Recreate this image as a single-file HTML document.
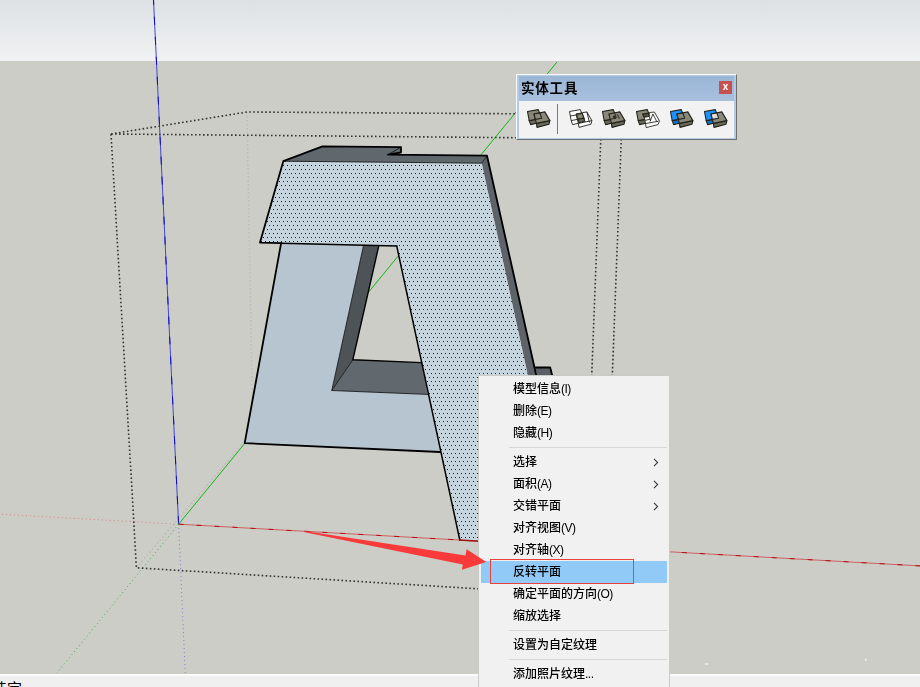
<!DOCTYPE html>
<html lang="zh-CN">
<head>
<meta charset="utf-8">
<title>SketchUp</title>
<style>
html,body{margin:0;padding:0;}
body{width:920px;height:687px;overflow:hidden;position:relative;background:#cdcdc8;font-family:"Liberation Sans","Noto Sans CJK SC",sans-serif;}
#view,#arrow{position:absolute;left:0;top:0;width:920px;height:687px;display:block;}
#arrow{pointer-events:none;}
#tb{position:absolute;left:516px;top:74px;width:219px;height:64px;background:#f2f2f2;border:1px solid #fbfbfb;border-right-color:#6e6e6e;border-bottom-color:#6e6e6e;box-sizing:content-box;}
#tb .in{position:absolute;left:0;top:0;right:0;bottom:0;border:1px solid #b4cbe6;border-left-width:2px;border-right-width:2px;}
#tb .title{position:absolute;left:0;top:0;right:0;height:25px;background:linear-gradient(#9bb6d6,#a8c0dd);}
#tb .title span{will-change:transform;position:absolute;left:2px;top:4px;font-size:13.5px;font-weight:bold;line-height:18px;color:#000;letter-spacing:0.8px;}
#tb .close{position:absolute;left:200px;top:5px;width:13px;height:13px;background:#c75050;color:#fff;font-size:10px;font-weight:bold;line-height:11px;text-align:center;}
#tb .sep{position:absolute;left:38px;top:28px;width:1px;height:30px;background:#7a7a7a;}
#tb svg{position:absolute;top:27px;width:40px;height:30px;}
#menu{position:absolute;left:478px;top:375px;width:190px;height:320px;border:1px solid #cacac8;background:#f1f1f1;font-size:12px;color:#000;}
#menu .it{position:absolute;left:2px;width:186px;height:22px;line-height:22px;}
#menu .it span{position:absolute;left:32px;top:0;white-space:nowrap;will-change:transform;font-weight:500;}
#menu .it b{font-weight:normal;font-size:12px;letter-spacing:-0.5px;}
#menu .it svg{position:absolute;left:172px;top:7px;width:6px;height:9px;}
#menu .hl{background:#91c9f7;}
#menu .sp{position:absolute;left:30px;width:158px;height:1px;background:#d7d7d7;}
#redbox{position:absolute;left:490px;top:559px;width:144px;height:25px;border:1px solid #e8423f;box-sizing:border-box;}
#status{position:absolute;left:0;top:674px;width:920px;height:13px;background:#f0f0f0;border-top:2px solid #fcfcfc;box-sizing:border-box;overflow:hidden;}
#status span{position:absolute;left:-8px;top:5px;font-size:15px;line-height:15px;color:#000;white-space:nowrap;}
</style>
</head>
<body>
<svg id="view" viewBox="0 0 920 687">
<defs>
<linearGradient id="sky" x1="0" y1="0" x2="0" y2="1"><stop offset="0" stop-color="#dde1e4"/><stop offset="1" stop-color="#f0f2f3"/></linearGradient>
<pattern id="dots" x="0" y="0" width="4" height="8" patternUnits="userSpaceOnUse">
<rect x="0" y="0" width="4" height="8" fill="#c6d4de"/>
<rect x="1" y="1" width="1" height="1" fill="#0000ff"/>
<rect x="3" y="5" width="1" height="1" fill="#0000ff"/>
</pattern>
</defs>
<rect x="0" y="0" width="920" height="687" fill="#cdcdc8"/>
<rect x="0" y="0" width="920" height="61" fill="url(#sky)"/>
<!-- hidden bbox edges -->
<g stroke="#bcbcb9" stroke-width="1.6" stroke-dasharray="1.6 2.4" fill="none">
<path d="M247 112 L253 440"/>
<path d="M136.4 567.8 L245 441"/>
</g>
<!-- axes -->
<g fill="none" stroke-width="1">
<path d="M178.6 524.2 L153.5 0" stroke="#4646cc"/><path d="M178.6 524.2 L153.5 0" stroke="#0c0cc4" stroke-dasharray="8 12"/>
<path d="M178.6 524.2 L185.3 674" stroke="#4a4ad8" stroke-opacity="0.6" stroke-dasharray="1 3"/>
<path d="M178.6 524.2 L920 565.9" stroke="#cc605e"/><path d="M178.6 524.2 L920 565.9" stroke="#b40c0c" stroke-dasharray="5 13"/>
<path d="M178.6 524.2 L0 514.2" stroke="#d05050" stroke-opacity="0.6" stroke-dasharray="1 3"/>
<path d="M178.6 524.2 L557 62" stroke="#14b414"/>
<path d="M178.6 524.2 L56.7 673.2" stroke="#22aa22" stroke-opacity="0.85" stroke-dasharray="1 3"/>
</g>
<!-- bbox -->
<g stroke="#333331" stroke-width="1.6" stroke-dasharray="1.6 2.4" fill="none">
<path d="M111 134 L247 112 L623 114.5"/>
<path d="M111 134 L601 138.5"/>
<path d="M111 134 L131.4 480 L136.4 567.8 L478.3 588.8"/>
<path d="M600.8 139 L591.7 376"/>
<path d="M622.2 115 L612.3 376"/>
</g>
<ellipse cx="706.6" cy="664" rx="2" ry="0.8" fill="#f4f4f2"/><ellipse cx="865.8" cy="659.8" rx="0.9" ry="1.1" fill="#f4f4f2"/>
<!-- A shape -->
<g stroke="none">
<polygon points="535.4,367.5 550.2,367.5 552.6,377 537.5,377" fill="#5a6066"/>
<polygon points="283.3,161.2 322.5,146.3 401,147.2 401,152.5 388,154.7 487,155.7 481.7,163.2" fill="#60676d"/>
<polygon points="481.7,163.2 487,155.7 541.8,400 533.2,400" fill="#5d6369"/>
<polygon points="363.6,245.2 378.7,246.2 352.8,359.8 331.8,390.5" fill="#4e5357"/>
<polygon points="352.8,359.8 421.7,362.6 427.7,394.4 331.8,390.5" fill="#61686e"/>
<polygon points="281.1,243.2 363.6,245.2 331.8,390.5 427.7,394.4 440.1,452 244.7,443.2" fill="#b6c5d0"/>
<polygon points="283.3,161.2 481.7,163.2 564.5,543.8 459.8,540 396.7,245.9 260,242.6" fill="url(#dots)"/>
</g>
<g fill="none" stroke="#000" stroke-linejoin="round" stroke-linecap="round">
<g stroke-width="0.9" stroke="#15181a">
<path d="M283.3 161.2 L481.7 163.2 L487 155.7"/>
<path d="M401 147.2 L388 154.7"/>
<path d="M363.6 245.2 L331.8 390.5 L427.7 394.4"/>
<path d="M352.8 359.8 L331.8 390.5"/>
</g>
<g stroke-width="1.8">
<path d="M281.1 243.2 L260 242.6 L283.3 161.2 L322.5 146.3 L401 147.2 L401 152.5 L388 154.7 L487 155.7 L541.8 400"/>
<path d="M535.4 367.5 L550.2 367.5 L552.6 377"/>
<path d="M281.1 243.2 L244.7 443.2 L440.1 452"/>
<path d="M378.7 246.2 L352.8 359.8 L421.7 362.6" stroke-width="1.4"/>
<path d="M396.7 245.9 L459.8 540" stroke-width="1.5"/>
</g>
<path d="M281.1 243.2 L396.7 245.9" stroke-width="1.5"/>
</g>
<path d="M459 540 L480 541.2" stroke="#a01010" stroke-width="1.4" fill="none"/>
</svg>

<div id="tb"><div class="in">
<div class="title"><span>实体工具</span><div class="close">x</div></div>
<div class="sep"></div>
<svg style="left:2.1px" viewBox="0 0 40 30"><g stroke="#23231c" stroke-width="1.1" stroke-linejoin="round"><polygon points="8.2,17.6 20.6,15.2 21,19 9.6,21.6" fill="#6a6959"/><polygon points="6.5,8.5 17.3,6.6 20.6,15.2 8.2,17.6" fill="#8a8879"/><polygon points="15.4,20.4 28.9,17.6 28,21.2 16,24.4" fill="#6a6959"/><polygon points="13,11 23.8,8.9 28.9,17.6 15.4,20.4" fill="#8a8879"/><polygon points="13,11 18.9,9.9 20.6,15.2 14.4,16.4" fill="#8a8879"/></g></svg>
<svg style="left:43.5px" viewBox="0 0 40 30"><g stroke="#23231c" stroke-width="1.1" stroke-linejoin="round"><g fill="#fdfdfd" stroke-width="0.9"><polygon points="6.5,8.5 17.3,6.6 20.6,15.2 21,19 9.6,21.6 8.2,17.6"/><path d="M8.2 17.6 L20.6 15.2 M7.3 13 L19 11" fill="none"/><polygon points="13,11 23.8,8.9 28.9,17.6 28,21.2 16,24.4 15.4,20.4"/><path d="M15.4 20.4 L28.9 17.6 M23.8 8.9 L26.5 19.5 M19 10 L22 18.8" fill="none"/></g><polygon points="13.5,11.4 19.2,10.3 21,15.1 14.8,16.2" fill="#8a8879"/><polygon points="14.8,16.2 21,15.1 21.4,18.3 16.2,19.7" fill="#6a6959"/></g></svg>
<svg style="left:77.3px" viewBox="0 0 40 30"><g stroke="#23231c" stroke-width="1.1" stroke-linejoin="round"><polygon points="8.2,17.6 20.6,15.2 21,19 9.6,21.6" fill="#6a6959"/><polygon points="6.5,8.5 17.3,6.6 20.6,15.2 8.2,17.6" fill="#8a8879"/><polygon points="15.4,20.4 28.9,17.6 28,21.2 16,24.4" fill="#6a6959"/><polygon points="13,11 23.8,8.9 28.9,17.6 15.4,20.4" fill="#8a8879"/><polygon points="13,11 18.7,10 20.4,14.8 14.4,16.4" fill="#858374" stroke-width="0.9"/><polygon points="16.8,12.8 19.2,12.4 20.1,15.6 17.6,16.3" fill="#2a2a22" stroke="none"/><path d="M21.2 11.3 L23.5 15.6" fill="none" stroke-width="1.2" stroke="#3a3a30"/></g></svg>
<svg style="left:111.3px" viewBox="0 0 40 30"><g stroke="#23231c" stroke-width="1.1" stroke-linejoin="round"><polygon points="8.2,17.6 20.6,15.2 21,19 9.6,21.6" fill="#6a6959"/><polygon points="6.5,8.5 17.3,6.6 20.6,15.2 8.2,17.6" fill="#8a8879"/><polygon points="12.6,11.1 18.7,10.2 19.4,13.3 14.2,14.4" fill="#55554a" stroke-width="1.2"/><g fill="#fbfbfb" stroke-width="0.85"><polygon points="14.2,14.4 19.4,13.3 19.2,9.6 24.4,9 29.5,18 28,21.6 16.2,24.6 15,17.6"/><path d="M15.4 20.6 L28.6 18.2 M22.9 11 L20 18.6 M22.9 11 L27 19 M19.4 13.3 L20.4 17.6 M14.8 17.4 L20.4 16.2" fill="none"/></g></g></svg>
<svg style="left:145.3px" viewBox="0 0 40 30"><g stroke="#23231c" stroke-width="1.1" stroke-linejoin="round"><polygon points="8.2,17.6 20.6,15.2 21,19 9.6,21.6" fill="#1070c8"/><polygon points="6.5,8.5 17.3,6.6 20.6,15.2 8.2,17.6" fill="#1e90ff"/><polygon points="15.4,20.4 28.9,17.6 28,21.2 16,24.4" fill="#6a6959"/><polygon points="13,11 23.8,8.9 28.9,17.6 15.4,20.4" fill="#8a8879"/><polygon points="13,11 18.9,9.9 20.6,15.2 14.4,16.4" fill="#8a8879"/></g></svg>
<svg style="left:179.3px" viewBox="0 0 40 30"><g stroke="#23231c" stroke-width="1.1" stroke-linejoin="round"><polygon points="8.2,17.6 20.6,15.2 21,19 9.6,21.6" fill="#1070c8"/><polygon points="6.5,8.5 17.3,6.6 20.6,15.2 8.2,17.6" fill="#1e90ff"/><polygon points="15.4,20.4 28.9,17.6 28,21.2 16,24.4" fill="#6a6959"/><polygon points="13,11 23.8,8.9 28.9,17.6 15.4,20.4" fill="#8a8879"/><polygon points="13,11 18.9,9.9 20.6,15.2 14.4,16.4" fill="#dcdcdc"/></g></svg>
</div></div>

<div id="status"><span>选定</span></div>
<div id="menu">
<div class="it" style="top:2px"><span>模型信息<b>(I)</b></span></div>
<div class="it" style="top:24px"><span>删除<b>(E)</b></span></div>
<div class="it" style="top:46px"><span>隐藏<b>(H)</b></span></div>
<div class="sp" style="top:71px"></div>
<div class="it" style="top:75px"><span>选择</span><svg viewBox="0 0 6 9"><path d="M1 0.8 L4.6 4.5 L1 8.2" fill="none" stroke="#3a3a3a" stroke-width="1.1"/></svg></div>
<div class="it" style="top:97px"><span>面积<b>(A)</b></span><svg viewBox="0 0 6 9"><path d="M1 0.8 L4.6 4.5 L1 8.2" fill="none" stroke="#3a3a3a" stroke-width="1.1"/></svg></div>
<div class="it" style="top:119px"><span>交错平面</span><svg viewBox="0 0 6 9"><path d="M1 0.8 L4.6 4.5 L1 8.2" fill="none" stroke="#3a3a3a" stroke-width="1.1"/></svg></div>
<div class="it" style="top:141px"><span>对齐视图<b>(V)</b></span></div>
<div class="it" style="top:163px"><span>对齐轴<b>(X)</b></span></div>
<div class="it hl" style="top:185px"><span>反转平面</span></div>
<div class="it" style="top:207px"><span>确定平面的方向<b>(O)</b></span></div>
<div class="it" style="top:229px"><span>缩放选择</span></div>
<div class="sp" style="top:254px"></div>
<div class="it" style="top:258px"><span>设置为自定纹理</span></div>
<div class="sp" style="top:283px"></div>
<div class="it" style="top:287px"><span>添加照片纹理<b>...</b></span></div>
</div>
<div id="redbox"></div>
<svg id="arrow" viewBox="0 0 920 687"><polygon points="304.8,530.9 465.4,555.4 466.7,549.3 486.3,562 461.9,569.8 462.8,564.6 304.8,532.2" fill="#f93a3a"/></svg>
</body>
</html>
